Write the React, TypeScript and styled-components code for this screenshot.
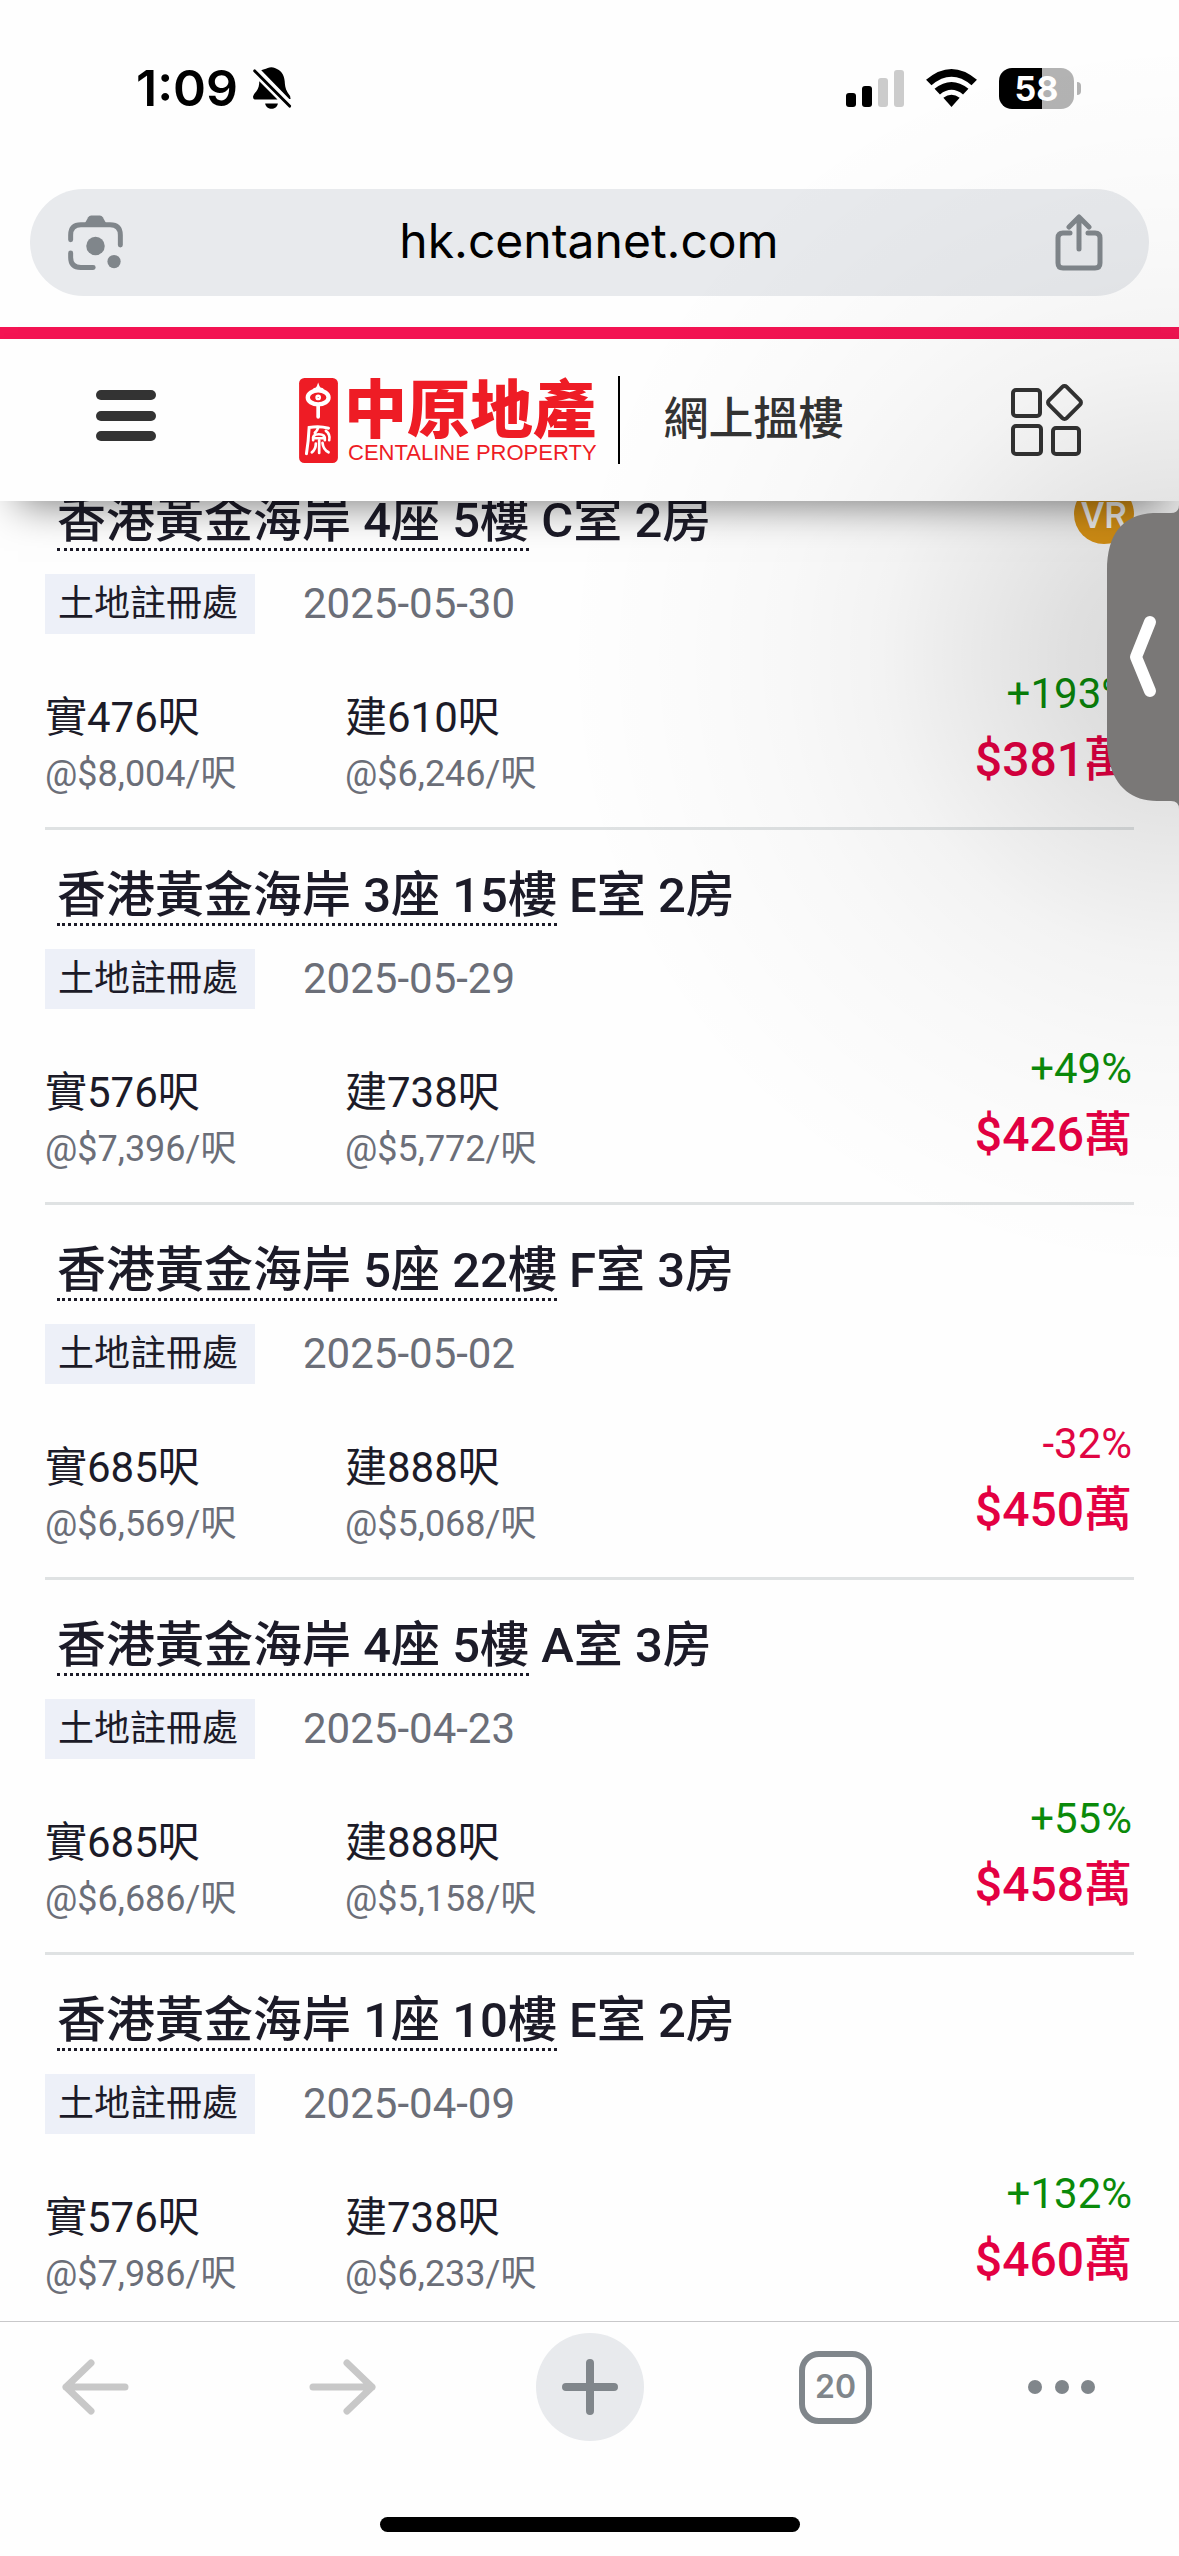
import React from 'react';
import styled, { createGlobalStyle } from 'styled-components';

const GlobalStyle = createGlobalStyle`
  *, *::before, *::after { box-sizing: border-box; }
  body { margin: 0; background: #fefefe; }
  button, input { font: inherit; color: inherit; margin: 0; }
  svg { display: block; }
`;

const uiFont = `Inter, "Noto Sans CJK TC", sans-serif`;
const webFont = `Roboto, "Noto Sans CJK TC", sans-serif`;

const Screen = styled.div`
  position: relative;
  display: flex;
  flex-direction: column;
  width: 100%;
  height: 100vh;
  overflow: hidden;
  background: #fefefe;
  font-family: ${webFont};
`;

const IconButton = styled.button`
  display: flex;
  align-items: center;
  justify-content: center;
  padding: 0;
  border: 0;
  background: none;
  cursor: pointer;
`;

/* Status bar */
const StatusBar = styled.div`
  flex: none;
  display: flex;
  align-items: center;
  justify-content: space-between;
  height: 176px;
  padding: 0 98px 0 136px;
  font-family: ${uiFont};
  color: #000;
`;

const StatusGroup = styled.div<{ $gap: number }>`
  display: flex;
  align-items: center;
  gap: ${(p) => p.$gap}px;
`;

const Clock = styled.span`
  font-size: 50px;
  line-height: 60px;
  font-weight: 600;
`;

const Battery = styled.div`
  display: flex;
  align-items: center;
  gap: 3px;
`;

const BatteryBody = styled.div`
  width: 75px;
  height: 41px;
  border-radius: 13px;
  background: linear-gradient(90deg, #000 58%, #b3b3b3 58%);
  color: #fff;
  font-size: 34px;
  line-height: 41px;
  font-weight: 700;
  text-align: center;
`;

const BatteryTip = styled.div`
  width: 4px;
  height: 13px;
  border-radius: 0 4px 4px 0;
  background: #b3b3b3;
`;

/* Address bar */
const AddressRow = styled.div`
  flex: none;
  padding: 13px 30px 31px;
  border-bottom: 12px solid #f41453;
`;

const AddressPill = styled.div`
  display: flex;
  align-items: center;
  height: 107px;
  padding: 0 46px 0 38px;
  border-radius: 54px;
  background: #e8eaed;
  color: #80868b;
`;

const AddressInput = styled.input`
  flex: 1;
  min-width: 0;
  padding: 0 0 4px;
  border: 0;
  background: none;
  outline: none;
  font-family: ${uiFont};
  font-size: 48px;
  line-height: 60px;
  color: #000;
  text-align: center;
`;

/* Site header */
const SiteHeader = styled.header`
  flex: none;
  position: relative;
  z-index: 1;
  display: flex;
  align-items: center;
  height: 162px;
  padding: 0 96px;
  background: #fefefe;
  box-shadow: 0 22px 38px -18px rgba(0, 0, 0, 0.5);
`;

const Brand = styled.a`
  display: flex;
  align-items: center;
  margin-left: 143px;
  color: #ee1c25;
  text-decoration: none;
`;

const Wordmark = styled.span`
  display: flex;
  flex-direction: column;
  margin-left: 6px;
  gap: 6px;
`;

const WordmarkHan = styled.span`
  font-family: "Noto Sans CJK TC", sans-serif;
  font-size: 63px;
  line-height: 60px;
  font-weight: 900;
`;

const WordmarkLatin = styled.span`
  padding-left: 4px;
  font-family: "Liberation Sans", sans-serif;
  font-size: 22px;
  line-height: 24px;
`;

const Tagline = styled.span`
  margin-left: 21px;
  padding-left: 44px;
  border-left: 2px solid #000;
  font-size: 45px;
  line-height: 88px;
  font-weight: 500;
  color: #333;
`;

const AppsButton = styled(IconButton)`
  margin-left: auto;
`;

/* Transactions */
const Viewport = styled.main`
  flex: 1;
  min-height: 0;
  overflow: hidden;
`;

const List = styled.ul`
  list-style: none;
  margin: -46px 0 0;
  padding: 0 45px;
`;

const Item = styled.li`
  position: relative;
  padding: 38px 0 25px;
  border-bottom: 3px solid #dfe2e3;
`;

const Title = styled.h2`
  margin: 0 0 23px 12px;
  font-size: 49px;
  line-height: 55px;
  font-weight: 500;
  color: #1c1b28;
  white-space: nowrap;
`;

const TitleLink = styled.a`
  display: inline-block;
  vertical-align: top;
  border-bottom: 3px dotted #1c1b28;
  color: inherit;
  text-decoration: none;
`;

const Meta = styled.div`
  display: flex;
  align-items: center;
  gap: 48px;
  margin-bottom: 27px;
`;

const SourceTag = styled.span`
  padding: 0 17px 0 13px;
  background: #edf0f8;
  font-size: 36px;
  line-height: 60px;
  color: #1c1b28;
`;

const DateText = styled.time`
  font-size: 42px;
  line-height: 60px;
  color: #6b6e78;
`;

const Figures = styled.div`
  display: flex;
  align-items: flex-end;
`;

const Area = styled.div`
  width: 300px;
`;

const AreaSize = styled.div`
  font-size: 42px;
  line-height: 56px;
  color: #1c1b28;
`;

const AreaRate = styled.div`
  font-size: 36px;
  line-height: 56px;
  color: #6b6e78;
`;

const Deal = styled.div`
  margin-left: auto;
  padding: 0 2px 9px 0;
  text-align: right;
  line-height: 66px;
`;

const Change = styled.div<{ $down: boolean }>`
  font-size: 42px;
  color: ${(p) => (p.$down ? '#e00543' : '#0a8a0a')};
`;

const Price = styled.div`
  font-size: 48px;
  font-weight: 500;
  color: #e30042;
`;

const VrBadge = styled.span`
  position: absolute;
  top: 29px;
  right: 0;
  width: 60px;
  height: 60px;
  border-radius: 50%;
  background: #e39a16;
  color: #fff;
  font-size: 36px;
  line-height: 64px;
  font-weight: 500;
  text-align: center;
`;

/* Side drawer handle with the soft shade it casts */
const Shade = styled.div`
  position: absolute;
  z-index: 2;
  right: 0;
  top: 0;
  width: 640px;
  height: 1300px;
  pointer-events: none;
  background: radial-gradient(
    circle 620px at 100% 657px,
    rgba(0, 0, 0, 0.15) 0,
    rgba(0, 0, 0, 0.12) 110px,
    rgba(0, 0, 0, 0.09) 185px,
    rgba(0, 0, 0, 0.045) 300px,
    rgba(0, 0, 0, 0.022) 400px,
    rgba(0, 0, 0, 0.01) 500px,
    rgba(0, 0, 0, 0) 620px
  );
`;

const DrawerHandle = styled(IconButton)`
  position: absolute;
  z-index: 3;
  right: 0;
  top: 505px;
`;

/* Browser toolbar */
const BottomBar = styled.footer`
  flex: none;
  padding: 11px 0 24px;
  border-top: 1px solid #c8c8ca;
  background: #fefefe;
`;

const Toolbar = styled.nav`
  display: grid;
  grid-template-columns: 247fr 227fr 263fr 229fr 67fr;
  align-items: center;
  justify-items: start;
  height: 108px;
  padding: 0 84px 0 62px;
`;

const NewTabButton = styled(IconButton)`
  width: 108px;
  height: 108px;
  border-radius: 50%;
  background: #e8eaed;
`;

const TabsButton = styled(IconButton)`
  width: 73px;
  height: 73px;
  border: 6px solid #80868b;
  border-radius: 20px;
  font-family: ${uiFont};
  font-size: 32px;
  line-height: 40px;
  font-weight: 600;
  color: #80868b;
`;

const HomeIndicator = styled.div`
  width: 420px;
  height: 15px;
  margin: 76px auto 0;
  border-radius: 8px;
  background: #000;
`;

const BellOff = () => (
  <svg width="40" height="43" viewBox="50 34 118 132" aria-hidden="true">
    <path d="M76 44 C85 40 92 40 96 37 Q107 32 118 37 C136 44 146 56 148 78 C149 96 152 104 158 114 Q166 122 166 132 L162 132 Z" fill="#000" />
    <path d="M70 78 L126 134 H60 Q50 134 51 124 Q52 118 60 110 C68 100 70 90 70 78 Z" fill="#000" />
    <path d="M88 146 H127 C124 168 91 168 88 146 Z" fill="#000" />
    <path d="M56 46 L163 154" stroke="#fefefe" strokeWidth="22" />
    <path d="M56 46 L163 154" stroke="#000" strokeWidth="9" strokeLinecap="round" />
  </svg>
);

const Signal = () => (
  <svg width="58" height="37" viewBox="0 0 58 37" aria-hidden="true">
    <rect x="0" y="23" width="10" height="14" rx="3" />
    <rect x="16" y="16" width="10" height="21" rx="3" />
    <rect x="32" y="8" width="10" height="29" rx="3" fill="#ccc" />
    <rect x="48" y="0" width="10" height="37" rx="3" fill="#ccc" />
  </svg>
);

const Wifi = () => (
  <svg width="51" height="38" viewBox="0 0 150 112" aria-hidden="true">
    <path d="M0 32 Q75 -32 150 32 L134 48 Q75 -2 16 48 Z" />
    <path d="M25 58 Q75 18 125 58 L109 75 Q75 48 41 75 Z" />
    <path d="M51 85 Q75 67 99 85 L75 112 Z" />
  </svg>
);

const Lens = () => (
  <svg width="55" height="56" viewBox="38 44 166 168" fill="none" aria-hidden="true">
    <path d="M46 118 V104 Q46 73 77 73 H165 Q196 73 196 104 V134 M46 158 V172 Q46 202 77 202 H114" stroke="#80868b" strokeWidth="15" strokeLinecap="round" />
    <path d="M86 74 L99 50 Q102 45 108 45 H134 Q140 45 143 50 L156 74 Z" fill="#80868b" />
    <circle cx="121" cy="137" r="28" fill="#80868b" />
    <circle cx="177" cy="184" r="20" fill="#80868b" />
  </svg>
);

const Share = () => (
  <svg width="48" height="57" viewBox="0 0 48 57" fill="none" stroke="#80868b" strokeWidth="5" strokeLinecap="round" strokeLinejoin="round" aria-hidden="true">
    <path d="M15 19 H8 Q3 19 3 24 V49 Q3 54 8 54 H40 Q45 54 45 49 V24 Q45 19 40 19 H33" />
    <path d="M24 35 V4 M14 13 L24 3 L34 13" />
  </svg>
);

const Hamburger = () => (
  <svg width="60" height="60" viewBox="0 0 60 60" fill="#333" aria-hidden="true">
    <rect y="0" width="60" height="10" rx="5" />
    <rect y="21" width="60" height="10" rx="5" />
    <rect y="41" width="60" height="10" rx="5" />
  </svg>
);

const Seal = () => (
  <svg width="39" height="85" viewBox="0 0 116 254" fill="none" stroke="#fff" strokeLinecap="round" aria-hidden="true">
    <rect width="116" height="254" rx="16" fill="#ee1c25" stroke="none" />
    <ellipse cx="57" cy="58" rx="31" ry="21" strokeWidth="13" />
    <path d="M46 34 Q54 33 57 25 Q60 33 69 34" strokeWidth="8" />
    <circle cx="57" cy="58" r="5" strokeWidth="7" />
    <path d="M57 80 V116" strokeWidth="11" />
    <path d="M88 150 Q60 142 30 148 Q28 190 22 226" strokeWidth="9" />
    <path d="M57 148 Q54 158 47 164 M42 186 Q38 168 59 168 Q80 168 77 186 M44 180 H75" strokeWidth="8" />
    <path d="M50 196 Q50 214 38 222 M60 186 V224 M70 194 Q72 214 88 222 M80 158 Q94 168 90 186" strokeWidth="8" />
  </svg>
);

const Apps = () => (
  <svg width="72" height="72" viewBox="0 0 72 72" fill="none" stroke="#333" strokeWidth="4" strokeLinejoin="round" aria-hidden="true">
    <rect x="2" y="6" width="27" height="26" rx="3" />
    <rect x="2" y="42" width="28" height="28" rx="3" />
    <rect x="42" y="44" width="26" height="26" rx="3" />
    <rect x="41" y="6" width="25" height="25" rx="3" transform="rotate(45 53.5 18.5)" />
  </svg>
);

const Handle = () => (
  <svg width="72" height="304" viewBox="0 0 72 304" aria-hidden="true">
    <path d="M72 0 Q72 8 64 8 H46 C16 10 0 28 0 66 V240 C2 276 20 296 50 296 H64 Q72 296 72 304 Z" fill="#7a7877" />
    <path d="M43 117 L29 152 L43 186" fill="none" stroke="#fff" strokeWidth="12" strokeLinecap="round" strokeLinejoin="round" />
  </svg>
);

const Arrow = ({ forward = false }: { forward?: boolean }) => (
  <svg width="67" height="56" viewBox="0 0 67 56" fill="none" stroke="#c8c8c8" strokeWidth="7" strokeLinecap="round" strokeLinejoin="round" aria-hidden="true">
    <path d={forward ? 'M4 28 H63 M38 4 L63 28 L38 52' : 'M63 28 H4 M29 4 L4 28 L29 52'} />
  </svg>
);

const Plus = () => (
  <svg width="56" height="56" viewBox="0 0 56 56" stroke="#80868b" strokeWidth="8" strokeLinecap="round" aria-hidden="true">
    <path d="M4 28 H52 M28 4 V52" />
  </svg>
);

const Dots = () => (
  <svg width="67" height="14" viewBox="0 0 67 14" fill="#80868b" aria-hidden="true">
    <circle cx="7" cy="7" r="7" />
    <circle cx="34" cy="7" r="7" />
    <circle cx="60" cy="7" r="7" />
  </svg>
);

interface DealRecord {
  block: string;
  unit: string;
  date: string;
  net: number;
  netRate: string;
  gross: number;
  grossRate: string;
  change: string;
  price: string;
  vr?: boolean;
}

const deals: DealRecord[] = [
  { block: '4座 5樓', unit: 'C室 2房', date: '2025-05-30', net: 476, netRate: '8,004', gross: 610, grossRate: '6,246', change: '+193%', price: '381', vr: true },
  { block: '3座 15樓', unit: 'E室 2房', date: '2025-05-29', net: 576, netRate: '7,396', gross: 738, grossRate: '5,772', change: '+49%', price: '426' },
  { block: '5座 22樓', unit: 'F室 3房', date: '2025-05-02', net: 685, netRate: '6,569', gross: 888, grossRate: '5,068', change: '-32%', price: '450' },
  { block: '4座 5樓', unit: 'A室 3房', date: '2025-04-23', net: 685, netRate: '6,686', gross: 888, grossRate: '5,158', change: '+55%', price: '458' },
  { block: '1座 10樓', unit: 'E室 2房', date: '2025-04-09', net: 576, netRate: '7,986', gross: 738, grossRate: '6,233', change: '+132%', price: '460' },
];

const DealItem = ({ deal }: { deal: DealRecord }) => (
  <Item>
    <Title>
      <TitleLink href="#">{`香港黃金海岸 ${deal.block}`}</TitleLink>
      {` ${deal.unit}`}
    </Title>
    <Meta>
      <SourceTag>土地註冊處</SourceTag>
      <DateText dateTime={deal.date}>{deal.date}</DateText>
    </Meta>
    <Figures>
      <Area>
        <AreaSize>{`實${deal.net}呎`}</AreaSize>
        <AreaRate>{`@$${deal.netRate}/呎`}</AreaRate>
      </Area>
      <Area>
        <AreaSize>{`建${deal.gross}呎`}</AreaSize>
        <AreaRate>{`@$${deal.grossRate}/呎`}</AreaRate>
      </Area>
      <Deal>
        <Change $down={deal.change.startsWith('-')}>{deal.change}</Change>
        <Price>{`$${deal.price}萬`}</Price>
      </Deal>
    </Figures>
    {deal.vr && <VrBadge>VR</VrBadge>}
  </Item>
);

export default function App() {
  return (
    <Screen lang="zh-Hant-HK">
      <GlobalStyle />
      <StatusBar>
        <StatusGroup $gap={14}>
          <Clock>1:09</Clock>
          <BellOff />
        </StatusGroup>
        <StatusGroup $gap={22}>
          <Signal />
          <Wifi />
          <Battery>
            <BatteryBody>58</BatteryBody>
            <BatteryTip />
          </Battery>
        </StatusGroup>
      </StatusBar>
      <AddressRow>
        <AddressPill>
          <IconButton aria-label="Search with camera"><Lens /></IconButton>
          <AddressInput aria-label="Address" type="text" defaultValue="hk.centanet.com" />
          <IconButton aria-label="Share"><Share /></IconButton>
        </AddressPill>
      </AddressRow>
      <SiteHeader>
        <IconButton aria-label="Menu"><Hamburger /></IconButton>
        <Brand href="#">
          <Seal />
          <Wordmark>
            <WordmarkHan>中原地產</WordmarkHan>
            <WordmarkLatin>CENTALINE PROPERTY</WordmarkLatin>
          </Wordmark>
          <Tagline>網上搵樓</Tagline>
        </Brand>
        <AppsButton aria-label="Apps"><Apps /></AppsButton>
      </SiteHeader>
      <Viewport>
        <List>
          {deals.map((deal) => (
            <DealItem key={deal.date} deal={deal} />
          ))}
        </List>
      </Viewport>
      <BottomBar>
        <Toolbar aria-label="Browser">
          <IconButton aria-label="Back"><Arrow /></IconButton>
          <IconButton aria-label="Forward"><Arrow forward /></IconButton>
          <NewTabButton aria-label="New tab"><Plus /></NewTabButton>
          <TabsButton>20</TabsButton>
          <IconButton aria-label="More"><Dots /></IconButton>
        </Toolbar>
        <HomeIndicator />
      </BottomBar>
      <Shade />
      <DrawerHandle aria-label="Open drawer"><Handle /></DrawerHandle>
    </Screen>
  );
}
